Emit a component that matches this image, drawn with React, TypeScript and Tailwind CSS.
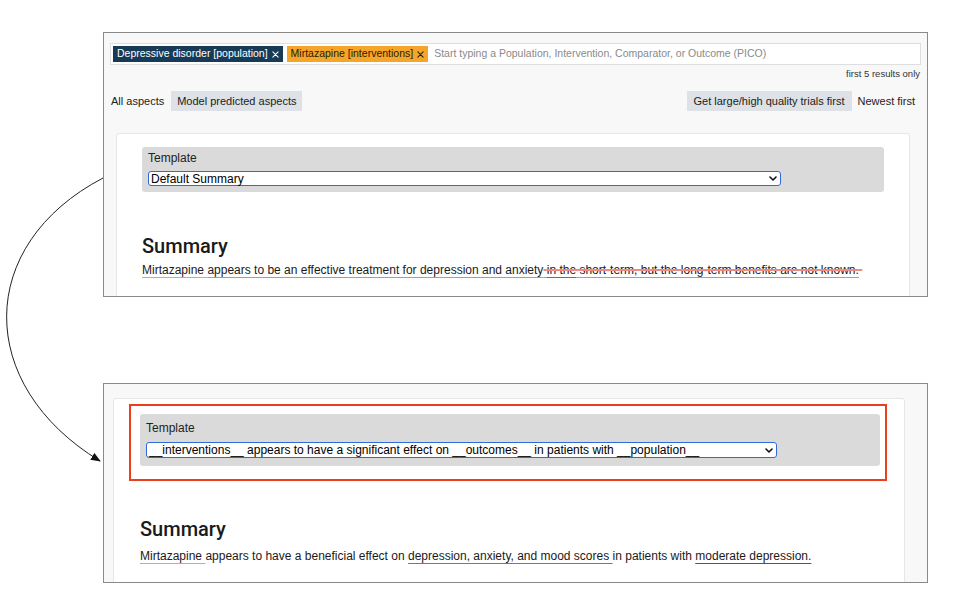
import React from "react";

// Small chevron used inside the fake select boxes
function Chevron() {
  return (
    <svg width="8" height="5" viewBox="0 0 8 5" className="shrink-0">
      <polyline points="1,1 4,4 7,1" fill="none" stroke="#111" strokeWidth="1.6" strokeLinecap="round" strokeLinejoin="round" />
    </svg>
  );
}

function TemplateBox({ value, tall }: { value: string; tall?: boolean }) {
  return (
    <div className={tall ? "bg-[#dadada] rounded-[3px] px-[6px] pt-[8px] pb-[8px]" : "bg-[#dadada] rounded-[3px] px-[6px] pt-[5px] pb-[6px]"}>
      <div className="text-[12px] leading-[12px] text-[#222]">Template</div>
      <div
        className={
          tall
            ? "mt-[8px] h-[16px] w-[631px] bg-white border-[1.5px] border-[#2f6bd8] rounded-[3px] flex items-center justify-between pl-[2px] pr-[3px]"
            : "mt-[7px] h-[15px] w-[633px] bg-white border-[1.5px] border-[#2f6bd8] rounded-[3px] flex items-center justify-between pl-[2px] pr-[3px]"
        }
      >
        <span className="text-[12px] leading-[12px] text-black whitespace-nowrap">{value}</span>
        <Chevron />
      </div>
    </div>
  );
}

function Chip({ label, dark }: { label: string; dark?: boolean }) {
  return (
    <span
      className={
        dark
          ? "h-[16px] px-[4px] flex items-center gap-[4px] bg-[#173a57] text-white text-[10.5px] whitespace-nowrap"
          : "h-[16px] px-[4px] flex items-center gap-[4px] bg-[#f6a52b] text-[#2a2000] text-[10.5px] whitespace-nowrap"
      }
    >
      {label}
      <svg width="7" height="7" viewBox="0 0 8 8">
        <path d="M1,1 L7,7 M7,1 L1,7" stroke="currentColor" strokeWidth="1.2" strokeLinecap="round" />
      </svg>
    </span>
  );
}

function FirstShot() {
  return (
    <div className="w-[825px] h-[265px] border border-[#8a8a8a] bg-[#f8f8f8] overflow-hidden px-[6px] pt-[10px]">
      <div className="h-[22px] bg-white border border-[#dedede] flex items-center gap-[4px] px-[2px]">
        <Chip label="Depressive disorder [population]" dark />
        <Chip label="Mirtazapine [interventions]" />
        <span className="ml-[2px] text-[10.5px] text-[#8a8a8a] whitespace-nowrap">
          Start typing a Population, Intervention, Comparator, or Outcome (PICO)
        </span>
      </div>
      <div className="mt-[3px] text-right text-[9.5px] leading-[11px] text-[#333] pr-[1px]">first 5 results only</div>

      <div className="mt-[12px] h-[20px] flex items-center justify-between">
        <div className="flex items-center h-full text-[11px] text-[#222]">
          <span className="px-[1px]">All aspects</span>
          <span className="ml-[6px] h-full flex items-center px-[6px] bg-[#dee1e5]">Model predicted aspects</span>
        </div>
        <div className="flex items-center h-full text-[11px] text-[#222]">
          <span className="h-full flex items-center px-[7px] bg-[#dee1e5]">Get large/high quality trials first</span>
          <span className="px-[6px]">Newest first</span>
        </div>
      </div>

      <div className="mt-[22px] ml-[6px] mr-[11px] h-[200px] bg-white border border-[#e6e6e6] rounded-[3px] px-[25px] pt-[13px]">
        <TemplateBox value="Default Summary" />
        <h2 className="mt-[42px] font-['Roboto',sans-serif] text-[20px] leading-[24px] font-medium text-[#1a1a1a]">Summary</h2>
        <p className="mt-[5px] text-[12px] leading-[14px] text-[#1a1a1a] whitespace-nowrap">
          <span className="underline decoration-[color:#f5a623] underline-offset-[3px]">Mirtazapine </span>
          <span className="underline decoration-[color:#9aa0a6] underline-offset-[3px]">
            appears to be an effective treatment for depression and anxiety
          </span>
          <span className="line-through decoration-[color:#f08a80] decoration-[1.5px]">
            <span className="underline decoration-[color:#9aa0a6] underline-offset-[3px]">
              {" "}
              <span className="underline decoration-[color:#3f78b5] underline-offset-[3px]">in the</span> short-term, but the long-term benefits are not known.
            </span>
            {"\u00a0"}
          </span>
        </p>
      </div>
    </div>
  );
}

function SecondShot() {
  return (
    <div className="mt-[86px] w-[825px] h-[200px] border border-[#8a8a8a] bg-[#f8f8f8] overflow-hidden pl-[9px] pr-[22px] pt-[14px]">
      <div className="h-[200px] bg-white border border-[#e6e6e6] rounded-[3px] pt-[5px]">
        <div className="ml-[15px] mr-[17px] border-2 border-[#ea3f1c] pl-[9px] pr-[5px] pt-[8px] pb-[13px]">
          <TemplateBox value="__interventions__ appears to have a significant effect on __outcomes__ in patients with __population__" tall />
        </div>
        <div className="pl-[26px]">
          <h2 className="mt-[36px] font-['Roboto',sans-serif] text-[20px] leading-[24px] font-medium text-[#1a1a1a]">Summary</h2>
          <p className="mt-[8px] text-[12px] leading-[14px] text-[#1a1a1a] whitespace-nowrap">
            <span className="underline decoration-[color:#f5a623] underline-offset-[3px]">Mirtazapine </span>
            appears to have a beneficial effect on{" "}
            <span className="underline decoration-[color:#c8489c] underline-offset-[3px]">depression, anxiety, and mood scores </span>
            in patients with{" "}
            <span className="underline decoration-[color:#2c5f80] underline-offset-[3px]">moderate depression.</span>
          </p>
        </div>
      </div>
    </div>
  );
}

export default function App() {
  return (
    <div className="relative w-[954px] h-[615px] bg-white overflow-hidden font-['Liberation_Sans',Arial,sans-serif]">
      <div className="pl-[103px] pt-[32px]">
        <FirstShot />
        <SecondShot />
      </div>

      {/* curved arrow linking the two screenshots */}
      <svg className="absolute inset-0 pointer-events-none" width="954" height="615" viewBox="0 0 954 615">
        <defs>
          <marker id="head" markerWidth="10" markerHeight="8" refX="9" refY="4" orient="auto" markerUnits="userSpaceOnUse">
            <polygon points="0,0 10,4 0,8" fill="#111" />
          </marker>
        </defs>
        <path d="M103,178 C-25,245 -25,385 100,461" fill="none" stroke="#222" strokeWidth="1" markerEnd="url(#head)" />
      </svg>
    </div>
  );
}
